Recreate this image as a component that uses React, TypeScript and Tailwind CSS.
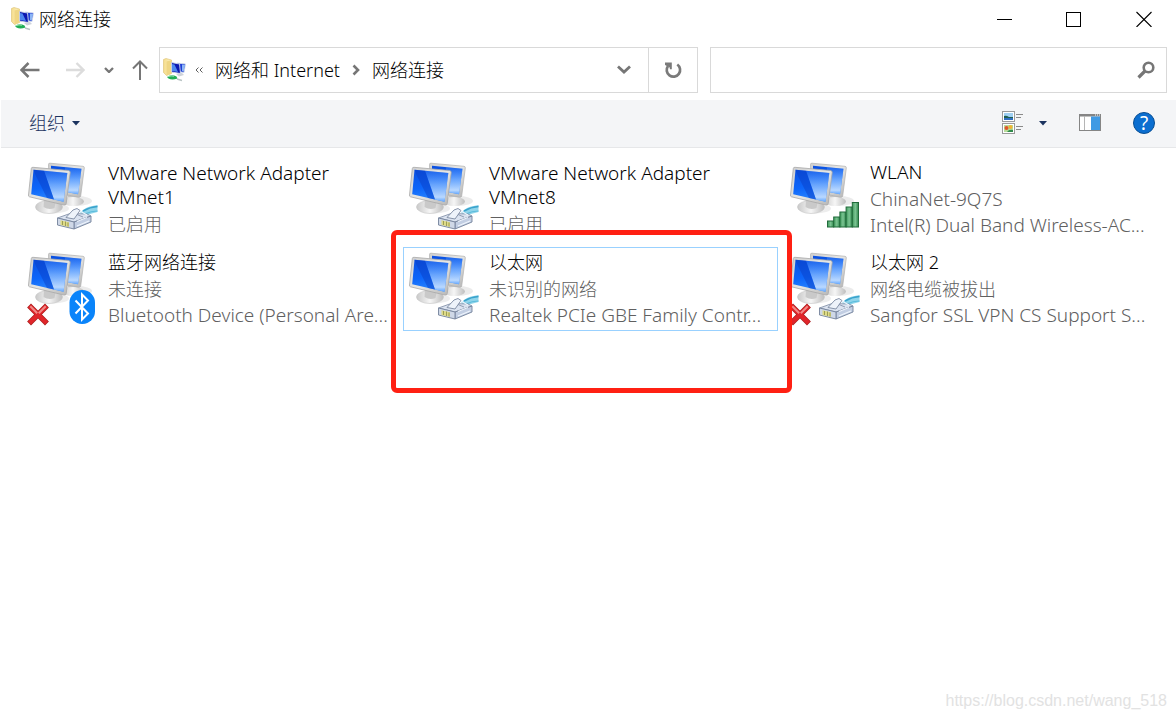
import type { ReactNode } from 'react'
import { clsx } from 'clsx'

type Overlay = 'cable' | 'bluetooth' | 'signal'

type Connection = {
  name: string
  status: string
  device?: string
  overlay: Overlay
  disconnected?: boolean
  selected?: boolean
}

const connections: Connection[] = [
  { name: 'VMware Network Adapter VMnet1', status: '已启用', overlay: 'cable' },
  { name: 'VMware Network Adapter VMnet8', status: '已启用', overlay: 'cable' },
  {
    name: 'WLAN',
    status: 'ChinaNet-9Q7S',
    device: 'Intel(R) Dual Band Wireless-AC...',
    overlay: 'signal',
  },
  {
    name: '蓝牙网络连接',
    status: '未连接',
    device: 'Bluetooth Device (Personal Are...',
    overlay: 'bluetooth',
    disconnected: true,
  },
  {
    name: '以太网',
    status: '未识别的网络',
    device: 'Realtek PCIe GBE Family Contr...',
    overlay: 'cable',
    selected: true,
  },
  {
    name: '以太网 2',
    status: '网络电缆被拔出',
    device: 'Sangfor SSL VPN CS Support S...',
    overlay: 'cable',
    disconnected: true,
  },
]

// Latin-only lines are set one size up, CJK glyphs already fill their em box
function textSize(text: string) {
  return /^[\x20-\x7e]+$/.test(text) ? 'text-[19px]' : 'text-[18px]'
}

// Gradients shared by every connection icon
function IconDefs() {
  return (
    <svg width="0" height="0" className="absolute" aria-hidden="true">
      <defs>
        <linearGradient id="screen" x1="0" y1="0" x2="0.15" y2="1">
          <stop offset="0" stopColor="#0a4fe0" />
          <stop offset="0.6" stopColor="#0d66fa" />
          <stop offset="1" stopColor="#2a86ff" />
        </linearGradient>
        <linearGradient id="glare" x1="0" y1="0" x2="0" y2="1">
          <stop offset="0" stopColor="#5c9dff" stopOpacity="0.25" />
          <stop offset="0.45" stopColor="#8fc0ff" stopOpacity="0.7" />
          <stop offset="0.85" stopColor="#d3e7ff" stopOpacity="0.85" />
          <stop offset="1" stopColor="#7db6ff" stopOpacity="0.7" />
        </linearGradient>
        <linearGradient id="bezel" x1="0" y1="0" x2="1" y2="1">
          <stop offset="0" stopColor="#cfcfcf" />
          <stop offset="0.5" stopColor="#e6e6e4" />
          <stop offset="1" stopColor="#b4b4b4" />
        </linearGradient>
        <linearGradient id="base" x1="0" y1="0" x2="1" y2="0">
          <stop offset="0" stopColor="#c9c9c9" />
          <stop offset="0.5" stopColor="#f6f6f6" />
          <stop offset="1" stopColor="#bdbdbd" />
        </linearGradient>
        <linearGradient id="bar" x1="0" y1="0" x2="1" y2="0">
          <stop offset="0" stopColor="#3f9a5c" />
          <stop offset="0.5" stopColor="#7cc493" />
          <stop offset="1" stopColor="#2f874c" />
        </linearGradient>
        <linearGradient id="folder" x1="0" y1="0" x2="1" y2="0">
          <stop offset="0" stopColor="#f5dc8a" />
          <stop offset="1" stopColor="#fdf3c4" />
        </linearGradient>
      </defs>
    </svg>
  )
}

function ConnectionIcon({ overlay, disconnected }: { overlay: Overlay; disconnected?: boolean }) {
  return (
    <svg viewBox="0 0 72 78" className="h-[78px] w-[72px] shrink-0" aria-hidden="true">
      {/* back monitor */}
      <ellipse cx="50" cy="41" rx="15" ry="5" fill="#000" opacity="0.08" />
      <path d="M40 33H52L51 40H42Z" fill="#c4c4c4" />
      <ellipse cx="46" cy="41.500" rx="11" ry="4.500" fill="url(#base)" />
      <path d="M21.500 4.500Q21.500 3 23 3.200L56 6.300Q57.500 6.500 57.300 8L53.700 36Q53.500 37.500 51.500 37.200L22 31Z" fill="url(#bezel)" stroke="#b0b0b0" strokeWidth="0.700" />
      <path d="M24 5.800L54.500 8.800L51 34.300L24 29Z" fill="url(#screen)" />
      <path d="M38 7.200L54.500 8.800L51 34.300L38 31.800Z" fill="url(#glare)" />
      {/* front monitor */}
      <ellipse cx="26" cy="48.500" rx="16" ry="5" fill="#000" opacity="0.07" />
      <ellipse cx="22" cy="47" rx="13.500" ry="6.500" fill="url(#base)" stroke="#c6c6c6" strokeWidth="0.600" />
      <path d="M17 38L29 41L27.500 48Q22 50.500 16.500 47Z" fill="#c9c9c9" />
      <path d="M4.300 8.500Q4.500 7.100 6 7.300L41.500 10.500Q43.400 10.800 43.200 12.500L39.200 43.500Q38.900 45.500 37 45L2.500 36.800Q1.300 36.500 1.500 35Z" fill="url(#bezel)" stroke="#a8a8a8" strokeWidth="0.800" />
      <path d="M6.500 9.700L40.300 13L36.500 41.800L4.200 34.300Z" fill="url(#screen)" />
      <path d="M17 10.700L40.300 13L36.500 41.800L27 39.600Z" fill="url(#glare)" />
      <path d="M6.500 9.700L17 10.700L27 39.600L20 38L8.500 15Z" fill="#0a40c8" opacity="0.5" />

      {overlay === 'cable' && <CableOverlay />}
      {overlay === 'signal' && <SignalOverlay />}
      {overlay === 'bluetooth' && (
        <g>
          <rect x="42.500" y="40" width="25.500" height="34" rx="12.500" fill="#0a84fa" />
          <path d="M48.500 50.500L61 63.500L55 69.500V44.500L61 50.500L48.500 63.500" fill="none" stroke="#fff" strokeWidth="2" />
        </g>
      )}
      {disconnected && (
        <g strokeLinecap="square">
          <path d="M4 57.500L18 71.500M18 57.500L4 71.500" stroke="#a91f1f" strokeWidth="5.500" />
          <path d="M4 57.500L18 71.500M18 57.500L4 71.500" stroke="#e0252a" strokeWidth="4.200" />
          <path d="M4 57L9.500 62.500M18 57L12.500 62.500" stroke="#f08a86" strokeWidth="2" />
        </g>
      )}
    </svg>
  )
}

function CableOverlay() {
  return (
    <g strokeLinejoin="round">
      <path d="M53 53Q57 48 63 46.500L70.500 45V52L63 54L59 56Z" fill="#8fd4ea" />
      <path d="M56 51Q63 47 70.500 46.500" fill="none" stroke="#3aa3cc" strokeWidth="1.600" />
      <path d="M58 54Q64 51 70.500 51" fill="none" stroke="#5cbcdc" strokeWidth="1.200" />
      <path d="M30.500 58L43 53.500L60 54L64 56L47 62Z" fill="#dbe3f0" stroke="#8693aa" strokeWidth="0.900" />
      <path d="M47 62L64 56V62L47 69Z" fill="#c2cee3" stroke="#74829b" strokeWidth="0.900" />
      <path d="M30.500 58L47 62V69L30.500 65Z" fill="#cfd8e7" stroke="#74829b" strokeWidth="0.900" />
      <path d="M33.500 60.300L42 62.300V67L33.500 65Z" fill="#dedb86" />
      <path d="M35.500 61V65M38.500 61.500V66M41 62.500V66.500" stroke="#8a8c4c" strokeWidth="0.800" />
      <path d="M39 57.500L46 50L50 48.500L53 50.500L47 59Z" fill="#eef3fa" stroke="#7d8aa2" strokeWidth="0.900" />
      <path d="M53 51L60 55M50 61.500L60 57.500M50 66L62 61" stroke="#eef4fc" strokeWidth="1.200" />
      <path d="M50 54.500L56 57" stroke="#7d8aa2" strokeWidth="0.800" />
    </g>
  )
}

function SignalOverlay() {
  const bars = [
    { x: 38.5, y: 61 },
    { x: 44.7, y: 57 },
    { x: 50.9, y: 52 },
    { x: 57.1, y: 47 },
    { x: 63.3, y: 42.5 },
  ]
  return (
    <g>
      {bars.map((b) => (
        <rect key={b.x} x={b.x} y={b.y} width="6.200" height={67 - b.y} fill="url(#bar)" stroke="#216b3b" strokeWidth="1" />
      ))}
    </g>
  )
}

function FolderIcon() {
  return (
    <svg viewBox="0 0 24 24" className="size-6 shrink-0" aria-hidden="true">
      <path d="M1.500 1.500L4 .5L9.500 2V15.500L4.500 17.500L1.500 14.500Z" fill="url(#folder)" stroke="#dcc070" strokeWidth="0.600" />
      <path d="M4.500 3.500L9.500 2V15.500L4.500 17.500Z" fill="#efd684" />
      <path d="M15 5L23.500 6L22 14.500L16 13.500Z" fill="#1f3fd6" stroke="#d5dcea" strokeWidth="0.900" />
      <path d="M20 6.500L23 7L21.700 13.500L20 13Z" fill="#8db6f5" />
      <path d="M9.500 4.500L17.500 6L18.500 15.500L9.500 14Z" fill="#0c17b0" stroke="#cfd8e8" strokeWidth="0.900" />
      <path d="M10 6L12.500 6.500L16 14L10 13Z" fill="#4d86ee" />
      <path d="M14 16L20 15L22 17L17 18.500Z" fill="#cfd3da" />
      <path d="M5 19Q9 16 14.500 18.500L15.500 20.500Q10 22.500 6.500 20.500Z" fill="#22ad55" />
      <path d="M6 18.700Q9 17.300 12 18.200" fill="none" stroke="#9be6b5" strokeWidth="1" />
      <path d="M15 21L20 22.500" stroke="#b9c4c4" strokeWidth="1.500" />
    </svg>
  )
}

function IconButton({ label, className, children }: { label: string; className?: string; children: ReactNode }) {
  return (
    <button type="button" aria-label={label} className={clsx('flex shrink-0 items-center justify-center', className)}>
      {children}
    </button>
  )
}

function Caret() {
  return (
    <svg viewBox="0 0 8 5" className="h-[5px] w-2" fill="#1b335f" aria-hidden="true">
      <path d="M0 0H8L4 4.500Z" />
    </svg>
  )
}

function TitleBar() {
  return (
    <header className="flex h-10 items-center pb-[2px] pl-[10px]">
      <FolderIcon />
      <h1 className="ml-[5px] flex-1">网络连接</h1>
      <IconButton label="最小化" className="h-9 w-[69px]">
        <svg viewBox="0 0 16 16" className="size-4" aria-hidden="true">
          <path d="M0 8.500H15" stroke="#000" />
        </svg>
      </IconButton>
      <IconButton label="最大化" className="h-9 w-[69px]">
        <svg viewBox="0 0 16 16" className="size-4" aria-hidden="true">
          <rect x="0.500" y="1.500" width="14" height="14" fill="none" stroke="#000" />
        </svg>
      </IconButton>
      <IconButton label="关闭" className="ml-1 h-9 w-16">
        <svg viewBox="0 0 16 16" className="size-4" aria-hidden="true">
          <path d="M0.500 1L15.500 16M15.500 1L0.500 16" stroke="#000" strokeWidth="1.100" />
        </svg>
      </IconButton>
    </header>
  )
}

function AddressBar() {
  return (
    <div className="flex items-center pt-[7px] pr-[9px] pb-[7px] pl-[18px]">
      <nav aria-label="导航" className="flex w-[141px] shrink-0 items-center">
        <IconButton label="后退" className="w-6">
          <svg viewBox="0 0 20 16" className="h-4 w-5" fill="none" stroke="#767676" strokeWidth="2.500" aria-hidden="true">
            <path d="M19.500 8H2M8.500 1L1.500 8L8.500 15" />
          </svg>
        </IconButton>
        <IconButton label="前进" className="ml-[21px] w-6">
          <svg viewBox="0 0 20 16" className="h-4 w-5" fill="none" stroke="#dcdcdc" strokeWidth="2.400" aria-hidden="true">
            <path d="M1 8H18M11.500 1L18.500 8L11.500 15" />
          </svg>
        </IconButton>
        <IconButton label="最近浏览的位置" className="ml-[10px] w-6">
          <svg viewBox="0 0 10 6" className="h-[6px] w-[10px]" fill="none" stroke="#767676" strokeWidth="2.300" aria-hidden="true">
            <path d="M1 1L5 5L9 1" />
          </svg>
        </IconButton>
        <IconButton label="上移" className="ml-[7px] w-6">
          <svg viewBox="0 0 16 20" className="h-5 w-4" fill="none" stroke="#767676" strokeWidth="2" aria-hidden="true">
            <path d="M8 20V2M1 8.500L8 1.500L15 8.500" />
          </svg>
        </IconButton>
      </nav>

      <div className="flex h-[46px] flex-[489] items-center border border-[#d9d9d9] pb-px pl-[2px]">
        <FolderIcon />
        <svg viewBox="0 0 8 6" className="mx-[9px] h-[6px] w-2" fill="none" stroke="#5f5f5f" aria-hidden="true">
          <path d="M3.500 0.500L1 3L3.500 5.500M7.500 0.500L5 3L7.500 5.500" />
        </svg>
        <a href="#internet" className="ml-[3px]">
          网络和 Internet
        </a>
        <svg viewBox="0 0 8 12" className="mx-3 h-3 w-2" fill="none" stroke="#767676" strokeWidth="2.600" aria-hidden="true">
          <path d="M1.500 1.500L6 6L1.500 10.500" />
        </svg>
        <a href="#connections" className="flex-1">
          网络连接
        </a>
        <IconButton label="以前的位置" className="h-11 w-12">
          <svg viewBox="0 0 14 9" className="h-[9px] w-[14px]" fill="none" stroke="#767676" strokeWidth="2.800" aria-hidden="true">
            <path d="M1 1.500L7 7L13 1.500" />
          </svg>
        </IconButton>
      </div>
      <IconButton label="刷新" className="h-[46px] w-[49px] border border-l-0 border-[#d9d9d9]">
        <svg viewBox="0 0 18 18" className="size-[18px]" aria-hidden="true">
          <path d="M4 5A6.700 6.700 0 1 0 13.300 3.500" fill="none" stroke="#7a7a7a" strokeWidth="2.700" />
          <path d="M1 1.500H7.800V8.300H6L5.500 6.300L1 4Z" fill="#7a7a7a" />
        </svg>
      </IconButton>

      <form role="search" className="ml-3 flex h-[46px] flex-[457] items-center border border-[#d9d9d9]">
        <input type="search" aria-label="搜索" className="min-w-0 flex-1 px-3 outline-none" />
        <IconButton label="开始搜索" className="h-11 w-10">
          <svg viewBox="0 0 18 18" className="size-[18px]" fill="none" stroke="#767676" aria-hidden="true">
            <circle cx="11.500" cy="6.500" r="4.800" strokeWidth="2.600" />
            <path d="M8 10L1.500 16.500" strokeWidth="3.200" />
          </svg>
        </IconButton>
      </form>
    </div>
  )
}

function Toolbar() {
  return (
    <div className="ml-px flex h-12 items-center border-b border-[#e6e7e9] bg-[#f4f5f7] pr-[21px] pb-px pl-7">
      <button type="button" className="flex items-center gap-[7px] text-[#1b335f]">
        组织
        <Caret />
      </button>
      <div className="ml-auto flex items-center">
        <IconButton label="更改您的视图" className="w-[22px]">
          <svg viewBox="0 0 22 24" className="h-6 w-[22px]" aria-hidden="true">
            <rect x="0.500" y="0.500" width="12" height="10" fill="#fff" stroke="#9a9a9a" />
            <path d="M2 2H11V9H2Z" fill="#9fd0f3" />
            <path d="M2 5Q4 4 7 6L11 6V7H2Z" fill="#1f5f50" />
            <path d="M2 7H11V9H2Z" fill="#2f6fc0" />
            <rect x="0.500" y="12.500" width="12" height="10" fill="#fff" stroke="#9a9a9a" />
            <path d="M2 14H11V21H2Z" fill="#b8dc9b" />
            <circle cx="4.500" cy="17" r="2" fill="#e0562c" />
            <circle cx="8.500" cy="16" r="2" fill="#f2b431" />
            <path d="M5 21Q7 18 11 19V21Z" fill="#2f8a4b" />
            <path d="M14 3.500H21M14 6.500H19M14 15.500H21M14 18.500H19" stroke="#8a8a8a" />
          </svg>
        </IconButton>
        <IconButton label="更多选项" className="ml-1 w-[30px]">
          <Caret />
        </IconButton>
        <IconButton label="显示预览窗格" className="ml-[21px] w-[22px]">
          <svg viewBox="0 0 22 18" className="h-[18px] w-[22px]" aria-hidden="true">
            <rect x="0.500" y="0.500" width="21" height="16" fill="#fff" stroke="#858585" />
            <path d="M0 0H22V2.500H0Z" fill="#858585" />
            <path d="M16 1H17M18 1H19M20 1H21" stroke="#fff" />
            <path d="M5.500 2V16" stroke="#b5b5b5" />
            <path d="M12 2.500H21V16H12Z" fill="#3f9ae4" />
          </svg>
        </IconButton>
        <IconButton
          label="帮助"
          className="ml-8 size-[22px] rounded-full border border-[#084e94] bg-[#0b6ed0] text-[19px] font-normal text-white"
        >
          ?
        </IconButton>
      </div>
    </div>
  )
}

function ConnectionTile({ connection }: { connection: Connection }) {
  const { name, status, device, overlay, disconnected, selected } = connection
  return (
    <li className="relative">
      <button
        type="button"
        className={clsx(
          'flex h-[84px] w-full items-center border pl-1 text-left',
          selected ? 'border-[#99d1ff]' : 'border-transparent',
        )}
      >
        <ConnectionIcon overlay={overlay} disconnected={disconnected} />
        <span className="ml-[9px] min-w-0 flex-1">
          <span className={clsx('mb-[2px] block max-w-[250px] leading-6', textSize(name))}>{name}</span>
          <span className={clsx('block leading-[26px] text-[#606060]', textSize(status))}>{status}</span>
          {device && (
            <span className={clsx('block leading-[26px] whitespace-nowrap text-[#606060]', textSize(device))}>{device}</span>
          )}
        </span>
      </button>
      {selected && (
        <div className="pointer-events-none absolute -top-[17px] -right-[14px] -bottom-[62px] -left-3 z-10 rounded-md border-[5px] border-[#ff2013]" />
      )}
    </li>
  )
}

export default function App() {
  return (
    <div className="flex min-h-screen flex-col bg-white font-['Noto_Sans','Noto_Sans_CJK_SC',sans-serif] text-[18px] leading-6 font-light text-black">
      <IconDefs />
      <TitleBar />
      <AddressBar />
      <Toolbar />
      <main className="flex-1 pt-[9px] pr-[17px] pl-[22px]">
        <ul className="grid grid-cols-3 gap-[6px]">
          {connections.map((c) => (
            <ConnectionTile key={c.name} connection={c} />
          ))}
        </ul>
      </main>
      <footer className="pr-[9px] pb-[6px] text-right font-['Liberation_Sans',sans-serif] text-base font-normal text-[#e2e2e2]">
        https://blog.csdn.net/wang_518
      </footer>
    </div>
  )
}
